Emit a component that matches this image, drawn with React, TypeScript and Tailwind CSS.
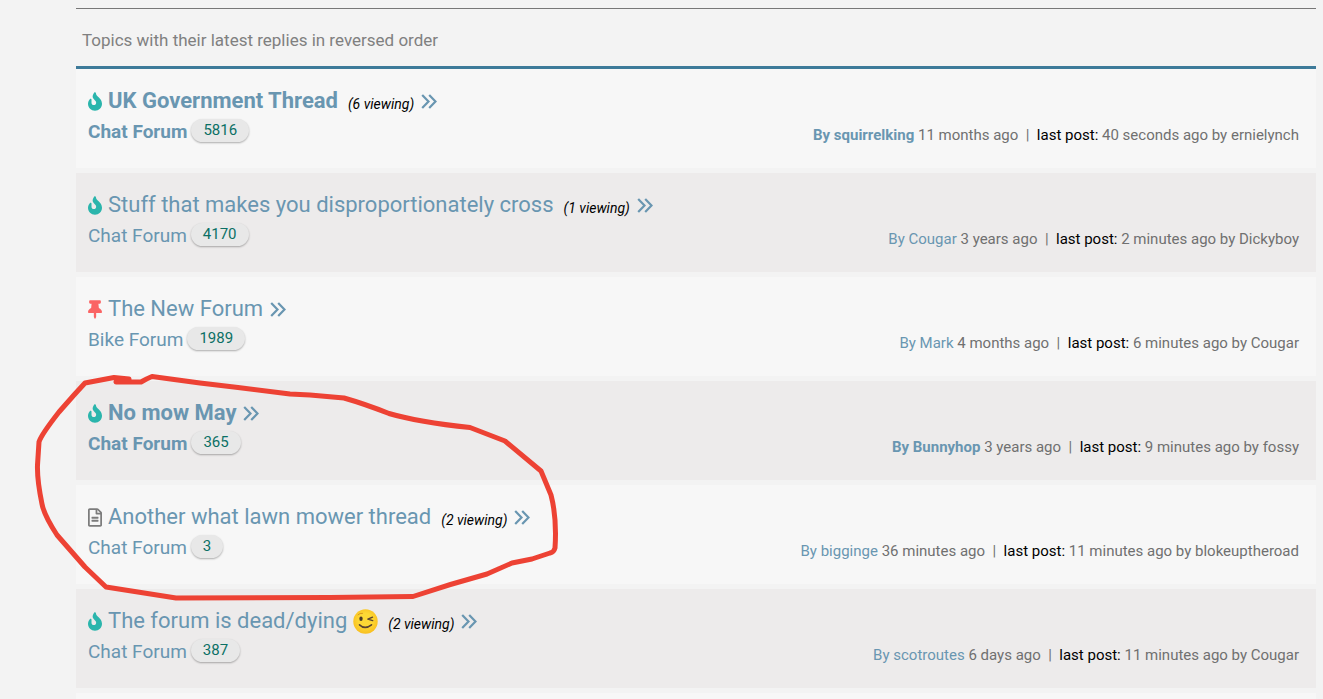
import { FaFire, FaRegFileAlt, FaThumbtack } from "react-icons/fa";

type Kind = "hot" | "pinned" | "plain";

interface Topic {
  kind: Kind;
  title: string;
  wink?: boolean;
  unread?: boolean;
  viewing?: number;
  forum: string;
  replies: number;
  author: string;
  started: string;
  lastPost: string;
}

const topics: Topic[] = [
  { kind: "hot", title: "UK Government Thread", unread: true, viewing: 6, forum: "Chat Forum", replies: 5816, author: "squirrelking", started: "11 months ago", lastPost: "40 seconds ago by ernielynch" },
  { kind: "hot", title: "Stuff that makes you disproportionately cross", viewing: 1, forum: "Chat Forum", replies: 4170, author: "Cougar", started: "3 years ago", lastPost: "2 minutes ago by Dickyboy" },
  { kind: "pinned", title: "The New Forum", forum: "Bike Forum", replies: 1989, author: "Mark", started: "4 months ago", lastPost: "6 minutes ago by Cougar" },
  { kind: "hot", title: "No mow May", unread: true, forum: "Chat Forum", replies: 365, author: "Bunnyhop", started: "3 years ago", lastPost: "9 minutes ago by fossy" },
  { kind: "plain", title: "Another what lawn mower thread", viewing: 2, forum: "Chat Forum", replies: 3, author: "bigginge", started: "36 minutes ago", lastPost: "11 minutes ago by blokeuptheroad" },
  { kind: "hot", title: "The forum is dead/dying", wink: true, viewing: 2, forum: "Chat Forum", replies: 387, author: "scotroutes", started: "6 days ago", lastPost: "11 minutes ago by Cougar" },
];

function TopicIcon({ kind }: { kind: Kind }) {
  if (kind === "hot") return <FaFire className="h-[19px] w-[14px] shrink-0 text-[#2bb5ac]" />;
  if (kind === "pinned") return <FaThumbtack className="h-[19px] w-[14px] shrink-0 text-[#fa6464]" />;
  return <FaRegFileAlt className="h-[19px] w-[14px] shrink-0 text-[#7c7c7c]" />;
}

function DoubleAngle() {
  return (
    <svg viewBox="0 0 16 15" className="h-[15px] w-4" fill="none" stroke="currentColor" strokeWidth="2.2" aria-hidden="true">
      <path d="M1.2 .9 7.5 7.5 1.2 14.1M8.2 .9l6.3 6.6-6.3 6.6" />
    </svg>
  );
}

function Wink() {
  return (
    <svg viewBox="0 0 25 25" className="h-[25px] w-[25px]" role="img" aria-label="winking face">
      <defs>
        <radialGradient id="face" cx="50%" cy="45%" r="55%">
          <stop offset="0.5" stopColor="#fdd835" />
          <stop offset="1" stopColor="#f9bf20" />
        </radialGradient>
      </defs>
      <circle cx="12.5" cy="12.5" r="12.2" fill="url(#face)" />
      <ellipse cx="8" cy="9.8" rx="1.7" ry="2.2" fill="#4a3a2a" />
      <g fill="none" stroke="#5b4330" strokeLinecap="round" strokeLinejoin="round">
        <path d="M5 5.8q2-2 4.5-1.5" stroke="#d8981c" strokeWidth="1" />
        <path d="M19.5 8.2l-4.6 2 4.8 1.4" strokeWidth="1.4" />
        <path d="M6.5 15.8q5.4 5.2 12 0" strokeWidth="1.6" />
      </g>
    </svg>
  );
}

function TopicRow({ topic }: { topic: Topic }) {
  const weight = topic.unread ? "font-bold" : "font-normal";
  return (
    <li className="flex h-[99px] items-start justify-between bg-[#f7f7f7] pt-[17px] pr-[17px] pl-3 even:bg-[#edebeb]">
      <div>
        <div className="flex h-[30px] items-center">
          <TopicIcon kind={topic.kind} />
          <a href="#topic" className={`ml-[6px] flex items-center gap-[6px] text-[22px] leading-[30px] text-[#6996b1] ${weight}`}>
            {topic.title}
            {topic.wink && <Wink />}
          </a>
          {topic.viewing && (
            <span className="ml-[10px] pt-[5px] text-sm text-black italic">({topic.viewing} viewing)</span>
          )}
          <a href="#latest" aria-label="Go to the latest post" className="ml-[7px] text-[#6996b1]">
            <DoubleAngle />
          </a>
        </div>
        <div className="flex h-8 items-center gap-1">
          <a href="#forum" className={`text-[19px] leading-7 text-[#6996b1] ${weight}`}>{topic.forum}</a>
          <span className="mb-1 h-[23px] rounded-full bg-[#e8e8e8] px-3 text-[15px] leading-[23px] text-[#0b7065] shadow-[0_1px_2px_rgba(0,0,0,0.3)]">
            {topic.replies}
          </span>
        </div>
      </div>
      <p className="mt-[39px] text-[15px] leading-5 whitespace-pre text-[#707070]">
        <a href="#author" className={`text-[#6996b1] ${weight}`}>By {topic.author}</a>
        {` ${topic.started}  |  `}
        <span className="text-black">last post:</span>
        {` ${topic.lastPost}`}
      </p>
    </li>
  );
}

export default function App() {
  return (
    <div className="relative h-screen overflow-hidden bg-[#f3f3f3] pt-2 pr-[7px] pl-[76px] font-['Roboto',sans-serif]">
      <header className="border-t border-b-3 border-t-[#777777] border-b-[#3d7a99] px-[6px] pt-[19px] pb-[14px]">
        <p className="text-[17px] leading-6 text-[#808080]">Topics with their latest replies in reversed order</p>
      </header>
      <ul className="flex flex-col gap-[5px]">
        {topics.map((topic) => (
          <TopicRow key={topic.title} topic={topic} />
        ))}
        <li className="h-[99px] bg-[#f7f7f7]" />
      </ul>
      <svg
        viewBox="0 0 600 620"
        className="pointer-events-none absolute top-0 left-0 h-[620px] w-[600px]"
        fill="none"
        stroke="#ed4234"
        strokeWidth="5"
        strokeLinecap="round"
        strokeLinejoin="round"
        aria-hidden="true"
      >
        <path d="M129 379 L116 382 L141 382 Q146 379 152 376.500 L200 383 L238 387.500 L290 394 L310 395 L344 398 Q365 404 389 413.500 Q418 422 470 427.500 L505 441 L541 471 L551 495 Q557 518 555 548 Q554 552 550 553 L532 559 L512 563 L487 574 Q450 584 413 596.500 L330 597.500 L176 598 L106 587 L85 567 L57 535 Q44 515 42 504 Q37 480 37.500 465 L39 442 Q41 435 59 412 L74 395 L85 383 L114 377.500 L129 379" />
      </svg>
    </div>
  );
}
